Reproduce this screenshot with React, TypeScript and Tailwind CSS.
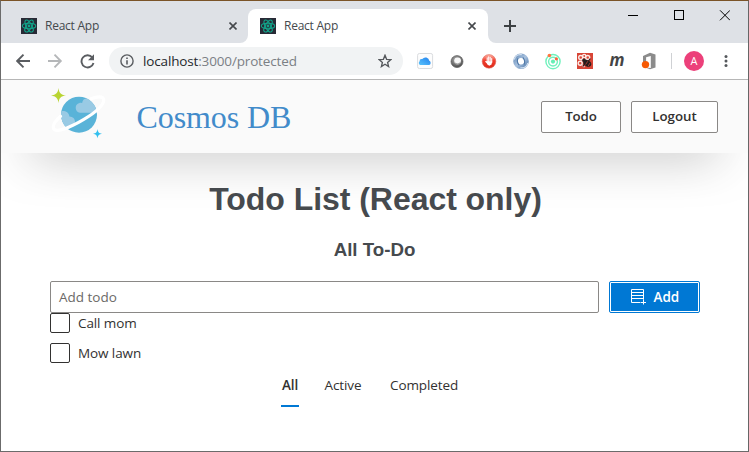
import React from "react";

function ReactFavicon() {
  return (
    <svg className="h-4 w-4 shrink-0" viewBox="0 0 16 16">
      <rect width="16" height="16" fill="#282a36" />
      <g fill="none" stroke="#12a48a" strokeWidth="1.1">
        <ellipse cx="8" cy="8" rx="6.7" ry="2.7" />
        <ellipse cx="8" cy="8" rx="6.7" ry="2.7" transform="rotate(60 8 8)" />
        <ellipse cx="8" cy="8" rx="6.7" ry="2.7" transform="rotate(120 8 8)" />
      </g>
      <circle cx="8" cy="8" r="1.4" fill="#12a48a" />
    </svg>
  );
}

function TabClose() {
  return (
    <svg className="h-2 w-2 shrink-0" viewBox="0 0 8 8">
      <path d="M0.5 0.5 7.5 7.5M7.5 0.5 0.5 7.5" stroke="#45484c" strokeWidth="1.6" />
    </svg>
  );
}

function TabStrip() {
  return (
    <div className="flex h-[42px] items-start bg-[#dee1e6]">
      <div className="mt-2 flex h-[34px] w-[247px] items-center pr-[11px] pl-5">
        <ReactFavicon />
        <span className="ml-2 flex-1 text-[12px] tracking-[-0.25px] text-[#45494d]">React App</span>
        <TabClose />
      </div>
      <div className="relative mt-2 flex h-[34px] w-[240px] items-center rounded-t-lg bg-white pr-[12px] pl-3">
        <svg className="absolute bottom-0 -left-2 h-2 w-2" viewBox="0 0 8 8">
          <path d="M8 0v8H0a8 8 0 0 0 8-8Z" fill="#fff" />
        </svg>
        <svg className="absolute -right-2 bottom-0 h-2 w-2" viewBox="0 0 8 8">
          <path d="M0 0v8h8a8 8 0 0 1-8-8Z" fill="#fff" />
        </svg>
        <ReactFavicon />
        <span className="ml-2 flex-1 text-[12px] tracking-[-0.25px] text-[#45494d]">React App</span>
        <TabClose />
      </div>
      <svg className="mt-[19px] ml-4 h-3 w-3" viewBox="0 0 12 12">
        <path d="M6 0v12M0 6h12" stroke="#3c4043" strokeWidth="2" />
      </svg>
      <svg className="mt-[9px] ml-[112px] h-[11px] w-[102px]" viewBox="0 0 102 11" fill="none" stroke="#000">
        <path d="M0 5.5h10" />
        <rect x="46.5" y="0.5" width="9" height="9" />
        <path d="m92 0.3 10 10M102 0.3l-10 10" />
      </svg>
    </div>
  );
}

function ExtensionIcons() {
  return (
    <svg className="ml-[14px] h-[26px] w-[242px] shrink-0" viewBox="0 -3 242 26">
      <defs>
        <linearGradient id="cloud" x1="0" x2="1" y1="1" y2="0">
          <stop offset="0" stopColor="#5bc4fb" />
          <stop offset="1" stopColor="#2180ee" />
        </linearGradient>
        <radialGradient id="ball" cx="0.45" cy="0.35" r="0.7">
          <stop offset="0" stopColor="#b5b5b5" />
          <stop offset="0.55" stopColor="#777" />
          <stop offset="1" stopColor="#3f3f3f" />
        </radialGradient>
        <linearGradient id="stop" x1="0" x2="0" y1="0" y2="1">
          <stop offset="0" stopColor="#ffb6a8" />
          <stop offset="0.45" stopColor="#f03b2b" />
          <stop offset="1" stopColor="#dc2a1a" />
        </linearGradient>
        <linearGradient id="ring" x1="0" x2="1" y1="0" y2="1">
          <stop offset="0" stopColor="#6f93bd" />
          <stop offset="0.5" stopColor="#a9c2df" />
          <stop offset="1" stopColor="#5d84b2" />
        </linearGradient>
      </defs>
      {/* cloud drive */}
      <rect x="0.6" y="2.5" width="15" height="15" rx="1.8" fill="#fdfdfd" stroke="#dadcdf" />
      <path d="M3 14a2.2 2.2 0 0 1-.5-3.6A2.4 2.4 0 0 1 5.3 8a3.9 3.9 0 0 1 7 1.800 2.300 2.300 0 0 1 0 4.200Z" fill="url(#cloud)" />
      {/* metallic sphere */}
      <circle cx="40" cy="10.6" r="6" fill="url(#ball)" stroke="#606060" strokeWidth="0.7" />
      <circle cx="40.6" cy="9.8" r="3.4" fill="#f7f7f7" />
      <path d="M37.3 10.2c1.6 3 4.8 2.9 6.6.1-.2 4.6-6 4.9-6.6-.1" fill="#999" />
      {/* stop hand */}
      <circle cx="72" cy="10.4" r="6.8" fill="url(#stop)" stroke="#dd6658" strokeWidth="0.6" />
      <g stroke="#fff" strokeWidth="1.1" strokeLinecap="round">
        <path d="M70.2 6.9v4M71.7 5.7v5M73.2 6.2v4M74.7 7.5v4M68.8 10.5l2 2" />
      </g>
      <path d="M69.7 10.2h5.5l-.7 3.4-2.2 1.2-2-1.4Z" fill="#fff" />
      {/* blue swirl */}
      <circle cx="104" cy="10.2" r="5.5" fill="none" stroke="url(#ring)" strokeWidth="4.6" />
      <path d="M97.3 8.5c.8-3.6 4-5.4 7.5-4.8M110.8 12c-.8 3.6-4 5.4-7.5 4.8" fill="none" stroke="#d0dfef" strokeWidth="1.3" />
      <path d="M101 7.2c-1.2 2.2-.6 4.8 1.2 7M107 13.4c1.2-2.2.6-4.8-1.2-7" fill="none" stroke="#4f78a6" strokeWidth="1.1" />
      {/* orbit */}
      <g fill="none" stroke="#71f1bd" strokeWidth="1.4">
        <circle cx="136" cy="10.6" r="7.1" />
        <circle cx="136" cy="10.6" r="4.4" />
      </g>
      <circle cx="136" cy="10.6" r="2.1" fill="#67eeb5" />
      <circle cx="132.4" cy="4.5" r="1.8" fill="#ff743d" />
      <circle cx="139.4" cy="7.8" r="1.6" fill="#ff603b" />
      {/* debugging bee */}
      <rect x="160" y="2" width="16" height="16" fill="#d84536" />
      <g fill="none" stroke="#fbe9e5" strokeWidth="1.4">
        <circle cx="163.7" cy="6.5" r="2" />
        <circle cx="170.7" cy="6.500" r="2" />
        <circle cx="163.200" cy="12.300" r="2" />
        <circle cx="167.200" cy="5" r="1.600" />
        <path d="M164.500 9.300h6M165.500 14.500l2 1.500" />
      </g>
      <ellipse cx="170.300" cy="12.300" rx="4.200" ry="3" transform="rotate(30 170.300 12.300)" fill="#251d1c" />
      <circle cx="167" cy="9.300" r="1.800" fill="#251d1c" />
      <path d="m171.500 10 1.800-2.500M167.500 13l-1.500 2.500" stroke="#251d1c" strokeWidth="1.200" />
      <path d="m170.800 10.200-2.200 3.400M173 12l-1.800 3" stroke="#d84536" strokeWidth="0.7" />
      <text x="192.6" y="15" fontFamily="Open Sans, sans-serif" fontWeight="700" fontStyle="italic" fontSize="18" fill="#444" textLength="15" lengthAdjust="spacingAndGlyphs">m</text>
      {/* office */}
      <path d="m226 5 7-3.2 5.5 1.7v13.1l-5.5 1.6-4.6-1.8 5.4.6V5l-4.7 1.2v6L226 13.3Z" fill="#8b8b8b" />
      <circle cx="228.5" cy="13.6" r="3.7" fill="#f65a05" />
    </svg>
  );
}

function Toolbar() {
  return (
    <div className="flex h-[37px] items-center border-b border-[#b6b6b6] bg-white pl-[15px]">
      <svg className="h-4 w-[80px] shrink-0" viewBox="0 0 80 16" fill="none" strokeWidth="1.9">
        <path d="M14 8H1.5M7.5 1.7 1.2 8l6.3 6.3" stroke="#5a5d61" />
        <path d="M32 8h12.5M38.5 1.7 44.8 8l-6.3 6.3" stroke="#b5b7b9" />
        <path d="M76.3 4.4A6.1 6.1 0 1 0 77.5 10" stroke="#5a5d61" />
        <path d="M78 1.2v6h-6Z" fill="#5a5d61" />
      </svg>
      <div className="ml-[13px] flex h-7 w-[294px] shrink-0 items-center rounded-full bg-[#f1f3f4] pr-[11px] pl-[11px]">
        <svg className="h-[14px] w-[14px]" viewBox="0 0 14 14" fill="none" stroke="#5a5d61">
          <circle cx="7" cy="7" r="6.1" strokeWidth="1.4" />
          <path d="M7 6.2v4.3M7 3.5v1.6" strokeWidth="1.6" />
        </svg>
        <span className="ml-[9px] flex-1 text-[13.5px] tracking-[-0.15px] text-[#7b8085]">
          <span className="text-[#25282c]">localhost</span>:3000/protected
        </span>
        <svg className="h-[14px] w-[14px]" viewBox="0 0 14 14">
          <path d="m7 1.3 1.6 4 4.3.3-3.3 2.8 1 4.2L7 10.3l-3.6 2.3 1-4.2-3.3-2.8 4.3-.3Z" fill="none" stroke="#55585c" strokeWidth="1.35" />
        </svg>
      </div>
      <ExtensionIcons />
      <div className="ml-[12px] h-4 w-px bg-[#cfd1d4]" />
      <div className="ml-[12px] flex h-5 w-5 items-center justify-center rounded-full bg-[#ec407a] text-[11px] text-white">A</div>
      <svg className="ml-[20px] h-3 w-1" viewBox="0 0 4 12" fill="#55585c">
        <circle cx="2" cy="1.5" r="1.5" />
        <circle cx="2" cy="6" r="1.5" />
        <circle cx="2" cy="10.5" r="1.5" />
      </svg>
    </div>
  );
}

function CosmosLogo() {
  return (
    <svg className="h-[52px] w-[56px]" viewBox="0 0 56 52">
      <defs>
        <clipPath id="planet">
          <circle cx="28" cy="26.7" r="18" />
        </clipPath>
      </defs>
      <circle cx="28" cy="26.7" r="18" fill="#59b3d8" />
      <g clipPath="url(#planet)" fill="#99cae4">
        <path d="M48 24.8H29a5 5 0 0 1-.5-9.8c1-.3 2 0 2.6.2.2-3 2.3-4.8 5-4.9 2-1.7 6.9-2.2 11.9-1Z" />
        <path d="M9 23.4c3.6-1.2 8.9-.3 9.4 5 4.4.3 6.5 3.5 5.2 7.3L15 44H8Z" />
      </g>
      <path d="M40.5 10.6C49 7.4 54.4 8.7 52.3 14.2 47.9 25.3 8.5 47 2.9 41.2 1 38.2 4.2 33 9.5 28.2" fill="none" stroke="#fff" strokeWidth="3.2" strokeLinecap="round" />
      <path d="M7.5 0C8.1 5 9.5 6.7 15 7.5 9.7 8.2 8.1 10 7.5 15 6.8 10 5.2 8.4 0 7.5 5.3 6.7 6.8 5 7.5 0" fill="#b8d432" />
      <path d="M46.5 41c.4 3.2 1.4 4.3 4.5 4.7-3 .5-4.1 1.5-4.5 4.6-.5-3-1.5-4.1-4.5-4.6 3-.4 4-1.5 4.5-4.7" fill="#32bfee" />
    </svg>
  );
}

function SiteHeader() {
  return (
    <header className="flex h-[73px] items-start bg-[#fafafa] pr-[30px] pl-[50px] shadow-[0_25px_50px_-30px_rgba(0,0,0,0.62)]">
      <div className="mt-2">
        <CosmosLogo />
      </div>
      <div className="mt-[19px] ml-[29.5px] flex-1 font-['Liberation_Serif',serif] text-[32px] leading-9 tracking-[-0.08px] text-[#428bca]">Cosmos DB</div>
      <nav className="mt-[21px] flex gap-[10px] text-[13.3px] font-semibold text-[#323130]">
        <button className="h-8 w-20 rounded-[2px] border border-[#8a8886] bg-white tracking-[-0.1px]">Todo</button>
        <button className="h-8 w-[87px] rounded-[2px] border border-[#8a8886] bg-white">Logout</button>
      </nav>
    </header>
  );
}

function TodoItem({ label }: { label: string }) {
  return (
    <label className="flex h-5 items-center gap-2">
      <span className="h-5 w-5 rounded-[2px] border border-[#323130] bg-white" />
      <span>{label}</span>
    </label>
  );
}

function TodoList() {
  return (
    <main className="relative flex flex-col pr-[47px] pl-[49px] text-[13.5px] tracking-[-0.1px] text-[#323130]">
      <h1 className="mt-[26px] text-center font-['Liberation_Sans',sans-serif] text-[32px] leading-10 font-bold tracking-[-0.05px] text-[#464a4e]">Todo List (React only)</h1>
      <h2 className="mt-[19px] pr-[2px] text-center font-['Liberation_Sans',sans-serif] text-[18.72px] leading-6 font-bold tracking-normal text-[#464a4e]">All To-Do</h2>
      <div className="mt-[19px] flex h-8 gap-[10px]">
        <div className="flex w-[549px] items-center rounded-[2px] border border-[#8a8886] bg-white pl-[8px] tracking-normal text-[#6b6967]">Add todo</div>
        <button className="flex w-[91px] items-center rounded-[2px] border border-[#0078d4] bg-white p-px font-semibold text-white">
          <span className="flex h-full w-full items-center bg-[#0078d4] pl-[20px]">
            <svg className="h-4 w-[15px]" viewBox="0 0 15 16" fill="none" stroke="#fff" strokeWidth="1">
              <path d="M9 13.5H.5V.5h12v10M.5 3.5h12M.5 6.5h12M.5 9.5h12M12.5 10.5v5M9.5 13.5h5.500" />
            </svg>
            <span className="ml-[7.5px] tracking-normal">Add</span>
          </span>
        </button>
      </div>
      <div className="flex flex-col gap-[10px]">
        <TodoItem label="Call mom" />
        <TodoItem label="Mow lawn" />
      </div>
      <nav className="mt-[1px] flex h-[43px] pl-[231px] leading-[42px]">
        <div className="flex w-[18px] justify-center border-b-2 border-[#0078d4] font-semibold">All</div>
        <div className="ml-[25.5px] w-[40px]">Active</div>
        <div className="ml-[25.5px]">Completed</div>
      </nav>
    </main>
  );
}

export default function App() {
  return (
    <div className="h-[452px] w-[749px] overflow-hidden border border-t-[#7b5428] border-r-[#666] border-b-[#6b6b6b] border-l-[#6b6b6b] bg-white font-['Open_Sans','Noto_Sans',sans-serif]">
      <TabStrip />
      <Toolbar />
      <div className="h-[371px] overflow-hidden">
        <SiteHeader />
        <TodoList />
      </div>
    </div>
  );
}
